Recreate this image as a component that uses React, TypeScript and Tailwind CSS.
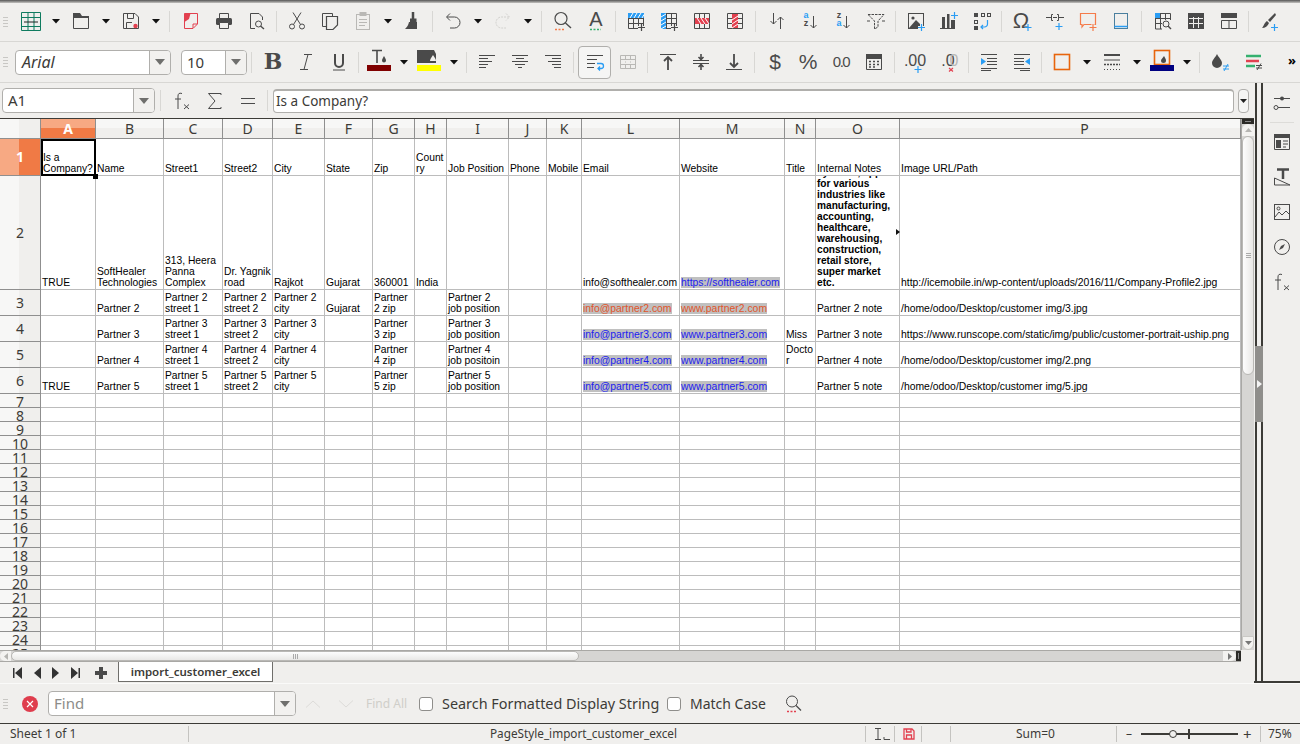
import React from "react";

const D = "#4a4a4a", B = "#2a9df4", R = "#e2404f", O = "#f57b4a", G = "#b9b8b5";

const S = ({ children, w = 20, h = 20 }: { children?: React.ReactNode; w?: number; h?: number }) => (
  <svg viewBox={`0 0 ${w} ${h}`} width={w} height={h} fill="none" stroke={D} strokeWidth={1} overflow="visible">{children}</svg>
);
const Plus = ({ x, y, c = B }: { x: number; y: number; c?: string }) => (
  <path d={`M${x - 3.5} ${y + 0.5}H${x + 3.5}M${x} ${y - 3}V${y + 4}`} stroke={c} strokeWidth={1.2} />
);
const T = ({ x, y, s, c = D, b, ff = "Liberation Sans", i, children }: any) => (
  <text x={x} y={y} fontSize={s} fill={c} stroke="none" textAnchor="middle" fontWeight={b ? 700 : 400} fontStyle={i ? "italic" : "normal"} fontFamily={ff}>{children}</text>
);
const TableBase = ({ c = D }: { c?: string }) => (
  <path d="M2.5 2.5H17.5V17.5H2.5ZM2.5 7.5H17.5M2.5 12.5H17.5M7.5 2.5V17.5M12.5 2.5V17.5" stroke={c} />
);
const Lines = ({ d }: { d: string }) => <path d={d} stroke={D} />;

const I: Record<string, React.ReactNode> = {
  calc: <S><path d="M.5 1.5H19.5V19.5H.5ZM.5 6.5H19.5M.5 15.5H19.5M7 1.5V19.5M13 1.5V19.5" stroke="#0f7b5f" /><path d="M3 11H17" stroke="#222" /></S>,
  open: <S><path d="M2.5 6.5H17.5V17.5H2.5Z" /><path d="M2 2H9L11 5H18V7H2Z" fill={D} stroke="none" /></S>,
  save: <S><path d="M2.5 2.5H14L17.5 6V17.5H2.5ZM6.5 2.5V7.5H12.5V2.5M5.5 17.5V11.5H11" /><circle cx="14.5" cy="15" r="2.2" fill={R} stroke="none" /></S>,
  pdf: <S><path d="M3.5 2.5H16.5V13L12 17.5H3.5ZM16 13H12V17" stroke={R} /><path d="M3.5 2.5H9.5L8 8L3.5 11Z" fill={R} stroke="none" /></S>,
  print: <S><path d="M5.5 7V2.5H14.5V7" /><rect x="2" y="7" width="16" height="7" rx="1.5" fill={D} stroke="none" /><path d="M5.5 11.5H14.5V17.5H5.5Z" fill="#f0efed" /></S>,
  preview: <S><path d="M8 17.5H3.5V2.5H12L15.5 6V9" /><circle cx="11.5" cy="13" r="3" /><path d="M13.5 15L17 18" strokeWidth={1.4} /></S>,
  cut: <S><circle cx="5" cy="15.5" r="2.5" /><circle cx="15" cy="15.5" r="2.5" /><path d="M6.5 13.5L14 1.5M13.5 13.5L6 1.5" /></S>,
  copy: <S><path d="M6 15.5H2.5V2.5H12.5V5" /><path d="M6.5 5.5H17.5V14L13 18.5H6.5Z" strokeWidth={1.2} /></S>,
  paste: <S><rect x="3.5" y="3.5" width="13" height="15" stroke={G} /><rect x="7" y="1.5" width="6" height="3" fill={G} stroke={G} /><path d="M6 8.5H14M6 11.5H14M6 14.5H12" stroke={G} /></S>,
  clone: <S><path d="M10 1V8" strokeWidth={2.5} /><path d="M7 7.5H13.5V11H7Z" fill={D} stroke="none" /><path d="M6 11H14V18H2C4 16 5.5 14 6 11Z" fill={D} stroke="none" /></S>,
  undo: <S><path d="M7 2.5L3.5 6L7 9.5M4 6H11.5A5.5 5.5 0 0 1 11.5 17H7" /></S>,
  redo: <S><path d="M13 2.5L16.5 6L13 9.5M16 6H8.5A5.5 5.5 0 0 0 8.5 17H13" stroke="#d2d1ce" strokeDasharray="2 1" /></S>,
  find: <S><circle cx="8" cy="7.5" r="6" strokeWidth={1.2} /><path d="M12.5 12L18 17" strokeWidth={1.4} /><path d="M2 18.5H12" stroke={O} strokeWidth={1.5} strokeDasharray="2 1.5" /></S>,
  fontA: <S><T x={10} y={15} s={20}>A</T><path d="M4 18.5H15" stroke="#35b06f" strokeWidth={1.5} strokeDasharray="2 1.5" /></S>,
  insRow: <S><TableBase /><rect x="2" y="2" width="16" height="5" fill={B} stroke="none" /><path d="M4 7L7 2M8 7L11 2M12 7L15 2M16 7L18 3.5" stroke="#fff" /><path d="M12 16.5H19M15.5 13V20" stroke="#f0efed" strokeWidth={3} /><Plus x={15.5} y={16} c={D} /></S>,
  insCol: <S><TableBase /><rect x="2" y="2" width="5" height="16" fill={B} stroke="none" /><path d="M2 6L7 3M2 10L7 7M2 14L7 11M2 18L7 15" stroke="#fff" /><path d="M12 16.5H19M15.5 13V20" stroke="#f0efed" strokeWidth={3} /><Plus x={15.5} y={16} c={D} /></S>,
  delRow: <S><TableBase /><rect x="3" y="7" width="14" height="6" fill={R} stroke="none" /><path d="M5 7L9 13M9 7L13 13M13 7L17 13" stroke="#fff" /></S>,
  delCol: <S><TableBase /><rect x="7" y="3" width="6" height="14" fill={R} stroke="none" /><path d="M7 9L13 5M7 13L13 9M7 17L13 13" stroke="#fff" /></S>,
  sort: <S><path d="M6.5 2V13M3.5 10L6.5 13L9.5 10M13.5 18V6M10.5 9L13.5 6L16.5 9" /></S>,
  sortAz: <S><T x={6} y={7} s={9} c={B} b>a</T><T x={6} y={15} s={9} b>z</T><path d="M13.5 5V17M10.5 14L13.5 17L16.5 14" /></S>,
  sortZa: <S><T x={6} y={7} s={9} b>z</T><T x={6} y={15} s={9} c={B} b>a</T><path d="M13.5 5V17M10.5 14L13.5 17L16.5 14" /></S>,
  filter: <S><path d="M2 3.5H18L12 10V16L8.5 18V10Z" strokeDasharray="2.5 1" /><path d="M1 10H4M16 10H19" /></S>,
  image: <S><rect x="2.5" y="2.5" width="15" height="15" /><circle cx="7" cy="7" r="1.6" fill={D} stroke="none" /><path d="M3 17L10 9L14 13L14 17Z" fill={D} stroke="none" /><path d="M12 16.5H19M15.5 13V20" stroke="#f0efed" strokeWidth={3} /><Plus x={15.5} y={16} /></S>,
  chart: <S><path d="M1 17.5H16" /><path d="M3 6H6V17H3ZM8 3H10.5V17H8ZM12 9H16V17H12Z" fill={D} stroke="none" /><Plus x={15.5} y={4} /></S>,
  pivot: <S><rect x="2" y="2" width="4" height="4" fill={D} stroke="none" /><rect x="9.5" y="2.5" width="3" height="3" /><rect x="15.5" y="2.5" width="3" height="3" /><rect x="2.5" y="9.5" width="3" height="3" /><rect x="2" y="15" width="4" height="4" fill={D} stroke="none" /><path d="M15.5 9V13A3 3 0 0 1 12.5 16H9M11 14L9 16L11 18" stroke={B} strokeWidth={1.2} /></S>,
  omega: <S><T x={9} y={17} s={22}>Ω</T><Plus x={16} y={16} /></S>,
  link: <S><path d="M1 6.5H6M14 6.5H19M8 3.5H6.5V9.5H8M12 3.5H13.5V9.5H12M8 6.5H12" /><Plus x={14} y={15} /></S>,
  comment: <S><path d="M2.5 2.5H17.5V13.5H6L4 16V13.5H2.5Z" stroke={O} strokeWidth={1.2} /><path d="M11 16.5H19M15 13V20" stroke="#f0efed" strokeWidth={3} /><Plus x={15} y={16} c={O} /></S>,
  header: <S><rect x="3.5" y="2.5" width="13" height="15" stroke="#4a7f9e" /><path d="M3.5 15.5H16.5" stroke={B} strokeWidth={1.5} /></S>,
  tsearch: <S><path d="M9 18H2.5V2.5H17.5V9M2.5 7.5H17.5M2.5 12.5H9M7.5 2.5V18M12.5 2.5V9" /><rect x="2" y="2" width="5" height="5" fill={B} stroke="none" /><circle cx="13" cy="13" r="3" /><path d="M15 15L18 18" strokeWidth={1.4} /></S>,
  tdark: <S><rect x="2" y="2" width="16" height="16" fill={D} stroke="none" /><path d="M7.5 6V17M12.5 6V17M3 7.5H17M3 12.5H17" stroke="#f0efed" /></S>,
  ttwo: <S><rect x="2" y="2" width="16" height="5" fill={D} stroke="none" /><path d="M2.5 9.5H17.5V17.5H2.5ZM10 9.5V17.5" /></S>,
  brush: <S><path d="M16 2L9 9L11 11L17 4Z" fill={D} stroke="none" /><path d="M8 10L10 12C9 15 6 17 3 17C5 15 5 12 8 10Z" fill={D} stroke="none" /><Plus x={15.5} y={16} /></S>,
  bold: <S><T x={10} y={17} s={22} b ff="DejaVu Serif">B</T></S>,
  italic: <S><path d="M8 2.5H16M4 17.5H12M12 2.5L8 17.5" /></S>,
  under: <S><path d="M6 2V11A4 4 0 0 0 14 11V2" strokeWidth={2} /><path d="M4 18H16" /></S>,
  fcolor: <svg width="26" height="26" viewBox="0 0 26 26" fill="none" stroke={D}><path d="M6 1.5H16M11 1.5V14" strokeWidth={1.6} /><path d="M18 7C19 9 20 10 20 11.5A2 2 0 0 1 16 11.5C16 10 17 9 18 7Z" fill={D} stroke="none" /><rect x="1" y="16" width="24" height="6" fill="#800000" stroke="none" /></svg>,
  bcolor: <svg width="26" height="26" viewBox="0 0 26 26" fill="none" stroke={D}><path d="M1 1H18L20 5V14H1Z" fill={D} stroke="none" /><path d="M17 6C19 9 20 10 20 12H14C14 10 15 9 17 6Z" fill="#f0efed" stroke="none" /><rect x="1" y="16" width="24" height="6" fill="#ffff00" stroke="none" /></svg>,
  left: <S><Lines d="M2 3.5H18M2 6.5H11M2 9.5H15M2 12.5H11M2 15.5H9" /></S>,
  center: <S><Lines d="M2 3.5H18M6 6.5H14M2 9.5H18M5 12.5H15M8 15.5H12" /></S>,
  right: <S><Lines d="M2 3.5H18M9 6.5H18M5 9.5H18M9 12.5H18M11 15.5H18" /></S>,
  wrap: <S><Lines d="M2 3.5H18M2 7.5H12M2 11.5H10M2 15.5H9" /><path d="M12 11.5H16A2.5 2.5 0 0 1 16 16.5H13M15 14.5L13 16.5L15 18.5" stroke={B} strokeWidth={1.3} /></S>,
  merge: <S><path d="M2.5 3.5H17.5V16.5H2.5ZM2.5 7.5H17.5M2.5 12.5H17.5M7.5 3.5V7.5M12.5 3.5V7.5M7.5 12.5V16.5M12.5 12.5V16.5M7 10H8M12 10H13" stroke={G} /></S>,
  vtop: <S><path d="M2 2.5H18" /><path d="M10 18V5M6 9L10 5L14 9" strokeWidth={1.8} /></S>,
  vmid: <S><path d="M2 8.5H18M2 11.5H18" /><path d="M10 2V7M7.5 5L10 7.5L12.5 5M10 18V13M7.5 15L10 12.5L12.5 15" strokeWidth={1.6} /></S>,
  vbot: <S><path d="M2 17.5H18" /><path d="M10 2V15M6 11L10 15L14 11" strokeWidth={1.8} /></S>,
  dollar: <S><T x={10} y={17} s={21}>$</T></S>,
  percent: <S><T x={10} y={17} s={21}>%</T></S>,
  num: <S><text x={10} y={15} fontSize={15} fill={D} stroke="none" textAnchor="middle" fontFamily="Liberation Sans" letterSpacing={-1.5}>0.0</text></S>,
  date: <S><path d="M2.5 2.5H17.5V17.5H2.5Z" /><rect x="2" y="2" width="16" height="5" fill={D} stroke="none" /><path d="M5 9.5H7M9 9.5H11M13 9.5H15M5 12.5H7M9 12.5H11M13 12.5H15M5 15H7M9 15H11" strokeWidth={1.5} /></S>,
  decAdd: <S><T x={9} y={14} s={16}>.00</T><Plus x={12} y={17} /></S>,
  decDel: <S><T x={9} y={14} s={16}>.0</T><T x={15} y={14} s={16} c={G}>0</T><path d="M10 16L14 19.5M14 16L10 19.5" stroke={R} strokeWidth={1.2} /></S>,
  indent: <S><Lines d="M2 2.5H18M8 6.5H18M8 9.5H18M8 12.5H18M2 16.5H18M2 18.5H12" /><path d="M2 6V13L7 9.5Z" fill={B} stroke="none" /></S>,
  outdent: <S><Lines d="M2 2.5H18M2 6.5H12M2 9.5H12M2 12.5H12M2 16.5H18M8 18.5H18" /><path d="M18 6V13L13 9.5Z" fill={B} stroke="none" /></S>,
  border: <S><rect x="2.5" y="2.5" width="15" height="15" stroke="#e8640c" strokeWidth={1.6} /></S>,
  lstyle: <S><path d="M2 3H18" strokeWidth={2} /><path d="M2 8H18" strokeWidth={1} /><path d="M2 12.5H18" strokeWidth={1.6} strokeDasharray="2 1" /><path d="M2 17.5H18" strokeDasharray="1 2" /></S>,
  bdcolor: <svg width="26" height="26" viewBox="0 0 26 26" fill="none"><rect x="5.5" y="1.5" width="15" height="14" stroke="#e8640c" strokeWidth={1.6} /><path d="M15 7C16 9 17 10 17 11.5A2.5 2.5 0 0 1 12 11.5C12 10 14 9 15 7Z" fill={D} /><rect x="1" y="16" width="24" height="6" fill="#000080" /></svg>,
  cdrop: <S><path d="M7 2C9 6 12 8 12 11A5 5 0 0 1 2 11C2 8 5 6 7 2Z" fill={D} stroke="none" /><path d="M13 14H19M13 17H19M18 12L14 19" stroke={B} /></S>,
  cbars: <S><path d="M3 4H18" stroke="#35b06f" strokeWidth={2.5} /><path d="M3 9H16" stroke={R} strokeWidth={2.5} /><path d="M3 14H12" stroke="#35b06f" strokeWidth={2.5} /><path d="M13 13.5H19M13 16H19M18 11.5L14 18" /></S>,
  fx: <S><path d="M10 2.5C7 1.5 6 3 6 5V18M3 8H9" /><path d="M12 13.5L17 18M17 13.5L12 18" /></S>,
  sum: <S><path d="M16 4V2.5H3.5L10 10L3.5 17.5H16V16" /></S>,
  eq: <S><path d="M3 7.5H17M3 12.5H17" /></S>,
  sliders: <S><path d="M2 5.5H18M2 14.5H18" /><circle cx="10" cy="5.5" r="2" fill={D} stroke="none" /><circle cx="4" cy="14.5" r="2" fill="#f0efed" /></S>,
  prop: <S><path d="M2.5 2.5H17.5V17.5H2.5Z" /><rect x="2" y="2" width="16" height="4" fill={D} stroke="none" /><rect x="4" y="8" width="5" height="8" fill={D} stroke="none" /><path d="M11 9H16M11 12H16M11 15H14" /></S>,
  style: <S><path d="M5 2.5H17" strokeWidth={2.5} /><path d="M11 3V12" strokeWidth={2.5} /><path d="M2.5 18V11L18 18Z" /></S>,
  gallery: <S><rect x="2.5" y="2.5" width="15" height="15" /><circle cx="6.5" cy="6.5" r="1.5" /><path d="M3 15L7 10L10 13L14 9L17 12" /></S>,
  nav: <S><circle cx="10" cy="10" r="7.5" /><path d="M13 7L11 11L7 13L9 9Z" fill={D} stroke="none" /></S>,
};

const Btn = ({ n, className = "" }: { n: string; className?: string }) => (
  <div className={`w-[33px] h-full flex items-center justify-center shrink-0 ${className}`}>{I[n]}</div>
);
const Tri = () => <svg width="8" height="5" viewBox="0 0 8 5"><path d="M0 0H8L4 4.5Z" fill="#111" /></svg>;
const Dd = () => <div className="w-[17px] h-full flex items-center justify-center shrink-0"><Tri /></div>;
const Sep = ({ className = "w-[7px]" }: { className?: string }) => (
  <div className={`${className} h-full flex items-center justify-center shrink-0`}><div className="w-px h-[21px] bg-[#d8d7d4]" /></div>
);
const Grip = () => (
  <div className="absolute left-[3px] top-1/2 -translate-y-1/2 flex flex-col gap-[2px]">
    <div className="w-[5px] h-px bg-[#c8c7c4]" /><div className="w-[5px] h-px bg-[#c8c7c4]" /><div className="w-[5px] h-px bg-[#c8c7c4]" /><div className="w-[5px] h-px bg-[#c8c7c4]" />
  </div>
);
const GrayTri = () => <svg width="10" height="6" viewBox="0 0 10 6"><path d="M0 0H10L5 6Z" fill="#6f6f6d" /></svg>;
const Combo = ({ className, text, italic }: { className: string; text?: string; italic?: boolean }) => (
  <div className={`${className} h-[25px] rounded-[4px] border border-[#b0afac] bg-white flex shrink-0 overflow-hidden`}>
    <div className={`flex-1 px-[5px] leading-[23px] text-[#3c3b37] ${italic ? "italic text-[16px] pl-[6px]" : "text-[15px]"}`}>{text}</div>
    <div className="w-[21px] border-l border-[#b0afac] bg-[#f2f1ef] flex items-center justify-center"><GrayTri /></div>
  </div>
);

const colLetters = "ABCDEFGHIJKLMNOP".split("");
const Link = ({ c, children }: { c: string; children: React.ReactNode }) => <span className={`bg-[#c0c0c0] text-[10.4px] ${c}`}>{children}</span>;
const blue = "text-[#1c1cf0]", red = "text-[#e0552a]";
const Job = ({ n, t }: { n: number; t: string }) => <>Partner {n}<br />{t}</>;

type Row = Record<string, React.ReactNode>;
const boldNote = "systems, apps for various industries like manufacturing, accounting, healthcare, warehousing, construction, retail store, super market etc.";
const rows: Row[] = [
  { B: "Name", C: "Street1", D: "Street2", E: "City", F: "State", G: "Zip", H: "Country", I: "Job Position", J: "Phone", K: "Mobile", L: "Email", M: "Website", N: "Title", O: "Internal Notes", P: "Image URL/Path" },
  { A: "TRUE", B: "SoftHealer Technologies", C: "313, Heera Panna Complex", D: "Dr. Yagnik road", E: "Rajkot", F: "Gujarat", G: "360001", H: "India", L: "info@softhealer.com", M: <Link c={blue}>https://softhealer.com</Link>, O: <b className="text-[10.15px]">{boldNote}</b>, P: "http://icemobile.in/wp-content/uploads/2016/11/Company-Profile2.jpg" },
  { B: "Partner 2", C: "Partner 2 street 1", D: "Partner 2 street 2", E: "Partner 2 city", F: "Gujarat", G: "Partner 2 zip", I: <Job n={2} t="job position" />, L: <Link c={red}>info@partner2.com</Link>, M: <Link c={red}>www.partner2.com</Link>, O: "Partner 2 note", P: "/home/odoo/Desktop/customer img/3.jpg" },
  { B: "Partner 3", C: "Partner 3 street 1", D: "Partner 3 street 2", E: "Partner 3 city", G: "Partner 3 zip", I: <Job n={3} t="job position" />, L: <Link c={blue}>info@partner3.com</Link>, M: <Link c={blue}>www.partner3.com</Link>, N: "Miss", O: "Partner 3 note", P: "https://www.runscope.com/static/img/public/customer-portrait-uship.png" },
  { B: "Partner 4", C: "Partner 4 street 1", D: "Partner 4 street 2", E: "Partner 4 city", G: "Partner 4 zip", I: <Job n={4} t="job positoin" />, L: <Link c={blue}>info@partner4.com</Link>, M: <Link c={blue}>www.partner4.com</Link>, N: "Doctor", O: "Partner 4 note", P: "/home/odoo/Desktop/customer img/2.png" },
  { A: "TRUE", B: "Partner 5", C: "Partner 5 street 1", D: "Partner 5 street 2", E: "Partner 5 city", G: "Partner 5 zip", I: <Job n={5} t="job position" />, L: <Link c={blue}>info@partner5.com</Link>, M: <Link c={blue}>www.partner5.com</Link>, O: "Partner 5 note", P: "/home/odoo/Desktop/customer img/5.jpg" },
];
const emptyRows = Array.from({ length: 19 }, (_, i) => i + 7);

const hdrBg = "bg-[linear-gradient(to_bottom,#f7f7f6_50%,#f0efed_50%)]";
const rowHdrBg = "bg-[linear-gradient(to_right,#f7f7f6_48%,#f0efed_48%)]";
const Cell = ({ children, c }: { children?: React.ReactNode; c?: string }) => (
  <div className={`relative min-w-0 border-r border-b border-[#bcbcbc] bg-white flex flex-col justify-end overflow-hidden pl-[1px] pb-[1px] leading-[11px] text-black break-words ${c === "P" ? "text-[10.4px] whitespace-nowrap" : "text-[10.3px]"} ${c === "L" || c === "M" ? "whitespace-nowrap" : ""}`} style={{ fontFamily: '"Liberation Sans", Arial, sans-serif' }}>
    <div>{children}</div>
  </div>
);
const RowHead = ({ n, active, small }: { n: number; active?: boolean; small?: boolean }) => (
  <div className={`border-r border-b border-[#8f8f8f] flex items-center justify-center text-[14px] leading-[14px] overflow-hidden ${small ? "pt-[2px]" : ""} ${active ? "bg-[linear-gradient(to_right,#f7a983_48%,#f07a45_48%)] text-white font-bold" : `${rowHdrBg} text-[#3c3b37]`}`}>{n}</div>
);

const Check = () => <div className="w-[14px] h-[14px] rounded-[3px] border border-[#8f8e8b] bg-white shrink-0" />;
const StSep = ({ className }: { className: string }) => <div className={`${className} w-px h-[16px] bg-[#c4c3c0] shrink-0`} />;

export default function App() {
  return (
    <div className="w-[1300px] h-[744px] flex flex-col overflow-hidden bg-[#f0efed] text-[#3c3b37]" style={{ fontFamily: '"Noto Sans", sans-serif' }}>
      <div className="h-[3px] shrink-0 bg-[linear-gradient(to_bottom,#555,#c4c3c0)]" />

      {/* toolbar 1 */}
      <div className="relative h-[39px] shrink-0 flex items-center pl-[14px] pb-[2px] border-b border-[#d8d7d4]">
        <Grip />
        <Btn n="calc" /><Dd /><Btn n="open" /><Dd /><Btn n="save" /><Dd />
        <Sep className="w-[10px]" />
        <Btn n="pdf" /><Btn n="print" /><Btn n="preview" /><Sep />
        <Btn n="cut" /><Btn n="copy" /><Btn n="paste" /><Dd /><Btn n="clone" /><Sep />
        <Btn n="undo" /><Dd /><Btn n="redo" /><Dd /><Sep className="w-[10px]" />
        <Btn n="find" /><Btn n="fontA" /><Sep />
        <Btn n="insRow" /><Btn n="insCol" /><Btn n="delRow" /><Btn n="delCol" /><Sep className="w-[9px]" />
        <Btn n="sort" /><Btn n="sortAz" /><Btn n="sortZa" /><Btn n="filter" /><Sep />
        <Btn n="image" /><Btn n="chart" /><Btn n="pivot" /><Sep />
        <Btn n="omega" /><Btn n="link" /><Btn n="comment" /><Btn n="header" /><Sep className="w-[9px]" />
        <Btn n="tsearch" /><Btn n="tdark" /><Btn n="ttwo" /><Sep />
        <Btn n="brush" />
      </div>

      {/* toolbar 2 */}
      <div className="relative h-[41px] shrink-0 flex items-center pl-[15px] border-b border-[#d8d7d4]">
        <Grip />
        <Combo className="w-[156px]" text="Arial" italic />
        <Combo className="w-[66px] ml-[10px]" text="10" />
        <Sep className="w-[9px]" />
        <Btn n="bold" /><Btn n="italic" /><Btn n="under" /><Sep />
        <Btn n="fcolor" /><Dd /><Btn n="bcolor" /><Dd /><Sep className="w-[8px]" />
        <Btn n="left" /><Btn n="center" /><Btn n="right" /><Sep className="w-[9px]" />
        <div className="w-[33px] h-[33px] rounded-[4px] border border-[#b0afac] bg-[#f5f5f4] flex items-center justify-center shrink-0">{I.wrap}</div>
        <Btn n="merge" /><Sep />
        <Btn n="vtop" /><Btn n="vmid" /><Btn n="vbot" /><Sep className="w-[8px]" />
        <Btn n="dollar" /><Btn n="percent" /><Btn n="num" /><Btn n="date" /><Sep className="w-[9px]" />
        <Btn n="decAdd" /><Btn n="decDel" /><Sep />
        <Btn n="indent" /><Btn n="outdent" /><Sep />
        <Btn n="border" /><Dd /><Btn n="lstyle" /><Dd /><Btn n="bdcolor" /><Dd /><Sep className="w-[8px]" />
        <Btn n="cdrop" /><Btn n="cbars" />
        <span className="ml-[19px] text-[13px] leading-none font-bold text-black -translate-y-[2px]">»</span>
      </div>

      {/* main */}
      <div className="h-[600px] shrink-0 flex">
        <div className="w-[1254px] shrink-0 flex flex-col">
          {/* formula bar */}
          <div className="h-[35px] shrink-0 flex items-center pl-[2px]">
            <Combo className="w-[153px]" text="A1" />
            <Sep className="w-[10px]" />
            <Btn n="fx" /><Btn n="sum" /><Btn n="eq" />
            <Sep className="w-[7px]" />
            <div className="ml-[2px] w-[961px] h-[24px] rounded-[4px] border border-[#b0afac] border-t-2 bg-white px-[2px] text-[13.5px] leading-[20px] shrink-0">Is a Company?</div>
            <div className="ml-[4px] w-[11px] h-[24px] rounded-[4px] border border-[#b0afac] flex items-center justify-center shrink-0 bg-[#f5f5f4]"><svg width="7" height="4" viewBox="0 0 7 4"><path d="M0 0H7L3.5 4Z" fill="#222" /></svg></div>
          </div>

          {/* grid + vertical scrollbar */}
          <div className="h-[532px] shrink-0 flex border-t border-[#3c3b37]">
            <div className="relative w-[1241px] overflow-hidden grid grid-cols-[41px_55px_68px_59px_50px_52px_48px_42px_32px_62px_38px_35px_98px_105px_31px_84px_341px] grid-rows-[20px_37px_114px_26px_26px_26px_26px_repeat(19,14px)]">
              <div className={`border-r border-b border-[#8f8f8f] ${rowHdrBg}`} />
              {colLetters.map((c, i) => (
                <div key={c} className={`border-r border-b border-[#8f8f8f] flex items-center justify-center text-[14px] leading-none ${c === "P" ? "pl-[29px]" : ""} ${i === 0 ? "bg-[linear-gradient(to_bottom,#f7a983_50%,#f07a45_50%)] text-white font-bold" : `${hdrBg} text-[#3c3b37]`}`}>{c}</div>
              ))}
              {rows.map((r, ri) => (
                <React.Fragment key={ri}>
                  <RowHead n={ri + 1} active={ri === 0} />
                  {colLetters.map((c) => {
                    if (ri === 0 && c === "A") {
                      return (
                        <div key={c} className="border-2 border-black bg-white flex flex-col justify-end text-[10.3px] leading-[11px] text-black" style={{ fontFamily: '"Liberation Sans", Arial, sans-serif' }}>Is a Company?</div>
                      );
                    }
                    return <Cell key={c} c={c}>{r[c]}</Cell>;
                  })}
                </React.Fragment>
              ))}
              {emptyRows.map((n) => (
                <React.Fragment key={n}>
                  <RowHead n={n} small />
                  {colLetters.map((c) => <Cell key={c} c={c} />)}
                </React.Fragment>
              ))}
              {/* fill handle and overflow marker lie over the grid */}
              <div className="absolute left-[93px] top-[55px] w-[5px] h-[5px] bg-black" />
              <svg className="absolute left-[896px] top-[110px]" width="4" height="6" viewBox="0 0 4 6"><path d="M0 0L4 3L0 6Z" fill="#111" /></svg>
            </div>
            <div className="w-[13px] shrink-0 flex flex-col bg-[#d6d5d3] border-l border-[#a9a8a5]">
              <div className="h-[5px] bg-[#2b2a27] flex items-center justify-center"><div className="w-[6px] h-px bg-[#888]" /></div>
              <div className="h-[12px] rounded-t-[6px] bg-[#f3f2f0] flex items-center justify-center"><svg width="7" height="4" viewBox="0 0 7 4"><path d="M0 4H7L3.5 0Z" fill="#b5b4b1" /></svg></div>
              <div className="h-[239px] rounded-[6px] border border-[#b9b8b5] bg-[linear-gradient(to_right,#fdfdfd,#e9e8e6)] flex flex-col items-center justify-center gap-[1px]">
                <div className="w-[5px] h-px bg-[#aaa]" /><div className="w-[5px] h-px bg-[#aaa]" /><div className="w-[5px] h-px bg-[#aaa]" />
              </div>
              <div className="flex-1" />
              <div className="h-[14px] rounded-b-[6px] bg-[#f3f2f0] border border-[#c9c8c5] flex items-center justify-center"><svg width="7" height="4" viewBox="0 0 7 4"><path d="M0 0H7L3.5 4Z" fill="#777" /></svg></div>
            </div>
          </div>

          {/* horizontal scrollbar */}
          <div className="h-[12px] shrink-0 w-[1241px] flex bg-[#d6d5d3] border-y border-[#a9a8a5]">
            <div className="w-[11px] bg-[#f3f2f0] rounded-l-[6px] flex items-center justify-center shrink-0"><svg width="4" height="7" viewBox="0 0 4 7"><path d="M4 0V7L0 3.5Z" fill="#b5b4b1" /></svg></div>
            <div className="w-[568px] rounded-[6px] border border-[#b9b8b5] bg-[linear-gradient(to_bottom,#fdfdfd,#e9e8e6)] flex items-center justify-center gap-[1px] shrink-0">
              <div className="h-[5px] w-px bg-[#aaa]" /><div className="h-[5px] w-px bg-[#aaa]" /><div className="h-[5px] w-px bg-[#aaa]" />
            </div>
            <div className="flex-1" />
            <div className="w-[13px] bg-[#f3f2f0] rounded-r-[6px] flex items-center justify-center shrink-0"><svg width="4" height="7" viewBox="0 0 4 7"><path d="M0 0V7L4 3.5Z" fill="#777" /></svg></div>
            <div className="w-[5px] bg-[#2b2a27] flex items-center justify-center shrink-0"><div className="h-[6px] w-px bg-[#888]" /></div>
          </div>

          {/* sheet tabs */}
          <div className="h-[21px] shrink-0 flex items-start">
            <div className="w-[118px] h-[21px] flex items-center pl-[12px] gap-[10px] shrink-0">
              <svg width="10" height="12" viewBox="0 0 10 12"><path d="M1 1H2.5V11H1ZM10 0V12L3 6Z" fill="#333" /></svg>
              <svg width="8" height="12" viewBox="0 0 8 12" className="ml-[1px]"><path d="M8 0V12L1 6Z" fill="#333" /></svg>
              <svg width="8" height="12" viewBox="0 0 8 12" className="ml-[1px]"><path d="M0 0V12L7 6Z" fill="#333" /></svg>
              <svg width="10" height="12" viewBox="0 0 10 12" className="ml-[1px]"><path d="M0 0V12L7 6ZM7.5 1H9V11H7.5Z" fill="#333" /></svg>
              <svg width="12" height="12" viewBox="0 0 12 12" className="ml-[4px]"><path d="M4 0H8V4H12V8H8V12H4V8H0V4H4Z" fill="#4a4a4a" /></svg>
            </div>
            <div className="w-[155px] h-[20px] bg-white border-x border-b border-[#6f6e6b] flex items-center justify-center text-[11.5px] font-semibold text-[#3c3b37] shrink-0">import_customer_excel</div>
          </div>
        </div>

        {/* sidebar */}
        <div className="flex-1 flex border-b-2 border-[#3c3b37]">
          <div className="w-[8px] shrink-0 flex flex-col border-x-2 border-[#3c3b37] ml-[1px]">
            <div className="h-[263px] shrink-0" />
            <div className="h-[76px] -mx-[2px] bg-[#8f8e8b] flex items-center justify-center">
              <svg width="5" height="8" viewBox="0 0 5 8"><path d="M0 0V8L5 4Z" fill="#f4f4f4" /></svg>
            </div>
          </div>
          <div className="flex-1 flex flex-col items-center pt-[10px]">
            <div className="h-[20px] flex items-center">{I.sliders}</div>
            <div className="w-[24px] h-px bg-[#dddcd9] mt-[9px] mb-[9px]" />
            <div className="flex flex-col items-center gap-[15px]">
              {I.prop}{I.style}{I.gallery}{I.nav}{I.fx}
            </div>
          </div>
        </div>
      </div>

      {/* find bar */}
      <div className="relative h-[40px] shrink-0 flex items-center border-t border-[#fafaf9]">
        <Grip />
        <svg className="ml-[22px]" width="16" height="16" viewBox="0 0 16 16"><circle cx="8" cy="8" r="8" fill="#df3d4d" /><path d="M5 5L11 11M11 5L5 11" stroke="#fff" strokeWidth="1.2" /></svg>
        <div className="ml-[10px] w-[248px] h-[25px] rounded-[4px] border border-[#b0afac] bg-white flex shrink-0 overflow-hidden">
          <div className="flex-1 px-[5px] text-[15px] leading-[23px] text-[#8d8c89]">Find</div>
          <div className="w-[21px] border-l border-[#b0afac] bg-[#f2f1ef] flex items-center justify-center"><GrayTri /></div>
        </div>
        <svg className="ml-[9px]" width="16" height="8" viewBox="0 0 16 8"><path d="M1 7.5L8 1L15 7.5" stroke="#dcdbd8" fill="none" /></svg>
        <svg className="ml-[17px]" width="16" height="8" viewBox="0 0 16 8"><path d="M1 .5L8 7L15 .5" stroke="#dcdbd8" fill="none" /></svg>
        <span className="ml-[12px] text-[12px] text-[#cfcec9] whitespace-nowrap w-[53px]">Find All</span>
        <Check />
        <span className="ml-[9px] text-[14.4px] text-[#3c3b37] whitespace-nowrap w-[225px]">Search Formatted Display String</span>
        <Check />
        <span className="ml-[9px] text-[14px] text-[#3c3b37] whitespace-nowrap w-[94px]">Match Case</span>
        <svg width="20" height="20" viewBox="0 0 20 20" fill="none" stroke={D}><circle cx="8" cy="7.5" r="5.5" /><path d="M12 11.5L17 16.5" strokeWidth={1.3} /><path d="M3 17.5H12" stroke={R} strokeWidth={1.4} strokeDasharray="2 1.5" /></svg>
      </div>

      {/* status bar */}
      <div className="h-[21px] shrink-0 border-t border-[#3c3b37] flex items-center text-[12px] text-[#3c3b37] whitespace-nowrap">
        <span className="ml-[10px] w-[178px] shrink-0">Sheet 1 of 1</span>
        <StSep className="" />
        <span className="ml-[301px] w-[375px] shrink-0 text-[11.75px]">PageStyle_import_customer_excel</span>
        <StSep className="" />
        <svg className="ml-[7px]" width="20" height="16" viewBox="0 0 20 16" fill="none" stroke={D}><path d="M2 2.5H8M2 13.5H8M5 2.5V13.5M11 13.5H17M11 11V13.5" /></svg>
        <StSep className="ml-[1px]" />
        <svg className="ml-[8px]" width="12" height="12" viewBox="0 0 12 12" fill="none" stroke={R} strokeWidth={1.3}><path d="M1 1H9L11 3V11H1ZM3.5 1V4H8V1M3.5 11V7H8.5V11" /></svg>
        <StSep className="ml-[6px]" />
        <StSep className="ml-[28px]" />
        <span className="ml-[65px] w-[100px] shrink-0">Sum=0</span>
        <StSep className="" />
        <span className="ml-[9px] w-[15px] shrink-0">–</span>
        <div className="relative w-[97px] h-[2px] bg-[#3c3b37] shrink-0">
          <div className="absolute left-[28px] -top-[3px] w-[8px] h-[8px] rounded-full border border-[#3c3b37] bg-[#f0efed]" />
          <div className="absolute left-[47px] -top-[4px] w-[2px] h-[10px] bg-[#3c3b37]" />
        </div>
        <span className="ml-[5px] w-[15px] shrink-0 text-[15px] leading-none">+</span>
        <StSep className="ml-[2px]" />
        <span className="ml-[7px]">75%</span>
      </div>
    </div>
  );
}
